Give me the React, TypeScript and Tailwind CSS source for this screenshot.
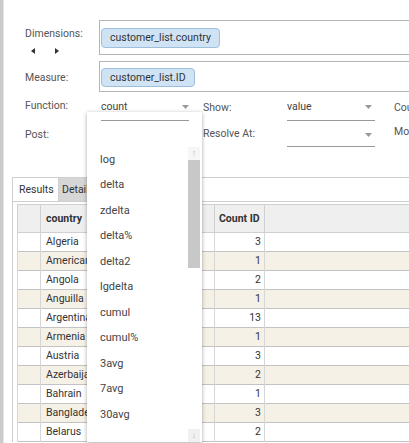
import React from "react";

const rows: [string, number][] = [
  ["Algeria", 3],
  ["American Samoa", 1],
  ["Angola", 2],
  ["Anguilla", 1],
  ["Argentina", 13],
  ["Armenia", 1],
  ["Austria", 3],
  ["Azerbaijan", 2],
  ["Bahrain", 1],
  ["Bangladesh", 3],
  ["Belarus", 2],
];

const fnOptions = ["log", "delta", "zdelta", "delta%", "delta2", "lgdelta", "cumul", "cumul%", "3avg", "7avg", "30avg"];

function Caret() {
  return (
    <svg width="7" height="4" viewBox="0 0 7 4" className="shrink-0">
      <path d="M0 0 L7 0 L3.5 4 Z" fill="#999" />
    </svg>
  );
}

function Chip({ label, h }: { label: string; h: string }) {
  return (
    <span className={`inline-flex items-center rounded-[4px] border border-[#9dbfdc] bg-[#cfe3f4] px-[8px] text-[10.5px] text-[#333] ${h}`}>
      {label}
    </span>
  );
}

export default function App() {
  return (
    <div className="flex h-[443px] w-[409px] overflow-hidden bg-white font-['Roboto',sans-serif]">
      {/* left strip */}
      <div className="w-[3px] shrink-0 bg-[#cbcbcb]" />
      <div className="w-[1px] shrink-0 bg-[#e6e6e6]" />

      <div className="relative flex min-w-[700px] flex-col">
        {/* form */}
        <div className="flex flex-col pl-[21px] pt-[20px] text-[10.5px] text-[#555]">
          <div className="flex">
            <div className="flex w-[74px] flex-col pt-[7px]">
              <span className="leading-[14px]">Dimensions:</span>
              <div className="mt-[7px] flex items-center gap-[20px] pl-[6px]">
                <svg width="4" height="6" viewBox="0 0 4 6"><path d="M4 0 L0 3 L4 6 Z" fill="#333" /></svg>
                <svg width="4" height="6" viewBox="0 0 4 6"><path d="M0 0 L4 3 L0 6 Z" fill="#333" /></svg>
              </div>
            </div>
            <div className="h-[35px] w-[400px] border border-r-0 border-[#b5b5b5] pl-[1px] pt-[7px]">
              <Chip label="customer_list.country" h="h-[20px]" />
            </div>
          </div>

          <div className="mt-[6px] flex">
            <div className="w-[74px] pt-[10px] leading-[14px]">Measure:</div>
            <div className="h-[31px] w-[400px] border border-r-0 border-[#b5b5b5] pl-[1px] pt-[6px]">
              <Chip label="customer_list.ID" h="h-[19px]" />
            </div>
          </div>

          <div className="mt-[7px] flex h-[22px]">
            <div className="w-[76px] leading-[14px]">Function:</div>
            <div className="flex h-[22px] w-[88px] items-start justify-between border-b border-[#999] pt-[1px] text-[#444]">
              <span className="leading-[14px]">count</span>
              <span className="pt-[5px]"><Caret /></span>
            </div>
            <div className="ml-[14px] w-[84px] pt-[2px] leading-[14px]">Show:</div>
            <div className="flex h-[22px] w-[88px] items-start justify-between border-b border-[#999] pt-[1px] text-[#444]">
              <span className="leading-[14px]">value</span>
              <span className="pr-[3px] pt-[5px]"><Caret /></span>
            </div>
            <div className="ml-[19px] pt-[2px] leading-[14px]">Count</div>
          </div>

          <div className="mt-[4px] flex h-[22px]">
            <div className="w-[76px] pt-[3px] leading-[14px]">Post:</div>
            <div className="w-[88px]" />
            <div className="ml-[14px] w-[84px] pt-[2px] leading-[14px]">Resolve At:</div>
            <div className="flex h-[22px] w-[88px] items-start justify-end border-b border-[#999] pt-[1px]">
              <span className="pr-[3px] pt-[7px]"><Caret /></span>
            </div>
            <div className="ml-[19px] leading-[14px]">Mode</div>
          </div>
        </div>

        {/* tabs + table */}
        <div className="ml-[8px] mt-[30px] flex flex-col border-l border-t border-[#cfcfcf] text-[10.5px] text-[#333]">
          <div className="flex h-[24px] border-b border-[#cfcfcf]">
            <div className="flex w-[46px] items-center border-r border-[#cfcfcf] bg-white pl-[6px]">Results</div>
            <div className="flex w-[70px] items-center bg-[#d6d6d6] pl-[3px]">Details</div>
          </div>

          <div className="pl-[4px] pt-[2px]">
            <table className="table-fixed border-collapse">
              <colgroup>
                <col className="w-[23px]" />
                <col className="w-[174px]" />
                <col className="w-[50px]" />
                <col className="w-[400px]" />
              </colgroup>
              <thead>
                <tr className="h-[28px] bg-[#efefef]">
                  <th className="border border-[#d0d0d0]" />
                  <th className="border border-[#d0d0d0] pl-[5px] text-left font-bold">country</th>
                  <th className="whitespace-nowrap border border-[#d0d0d0] pl-[4px] text-left font-bold">Count ID</th>
                  <th className="border-y border-[#d0d0d0]" />
                </tr>
              </thead>
              <tbody>
                {rows.map(([c, n], i) => (
                  <tr key={c} className={`h-[19px] border-b border-[#c3c3c3] ${i % 2 === 1 ? "bg-[#f5f1e7]" : "bg-white"}`}>
                    <td className="border-x border-[#d6d6d6]" />
                    <td className="overflow-hidden whitespace-nowrap border-r border-[#d6d6d6] pl-[5px]">{c}</td>
                    <td className="border-r border-[#d6d6d6] pr-[3px] text-right">{n}</td>
                    <td />
                  </tr>
                ))}
              </tbody>
            </table>
          </div>
        </div>

        {/* function dropdown */}
        <div className="absolute left-[83px] top-[112px] flex h-[330px] w-[115px] flex-col bg-white shadow-[0_1px_4px_rgba(0,0,0,0.35)]">
          <div className="ml-[14px] mt-[8px] h-[1px] w-[88px] bg-[#999]" />
          <div className="mt-[26px] flex flex-1 overflow-hidden">
            <div className="flex flex-1 flex-col overflow-hidden text-[11px] text-[#444]">
              {fnOptions.map((o) => (
                <div key={o} className="flex h-[25.5px] shrink-0 items-center pl-[13px]">{o}</div>
              ))}
            </div>
            <div className="mr-[2px] flex w-[12px] flex-col bg-white">
              <div className="flex h-[13px] items-center justify-center bg-[#f6f6f6] text-[9px] leading-none text-[#bbb]">↑</div>
              <div className="h-[108px] bg-[#c8c8c8]" />
              <div className="flex-1" />
              <div className="flex h-[13px] items-center justify-center bg-[#f0f0f0] text-[9px] leading-none text-[#bbb]">↓</div>
            </div>
          </div>
        </div>
      </div>
    </div>
  );
}
